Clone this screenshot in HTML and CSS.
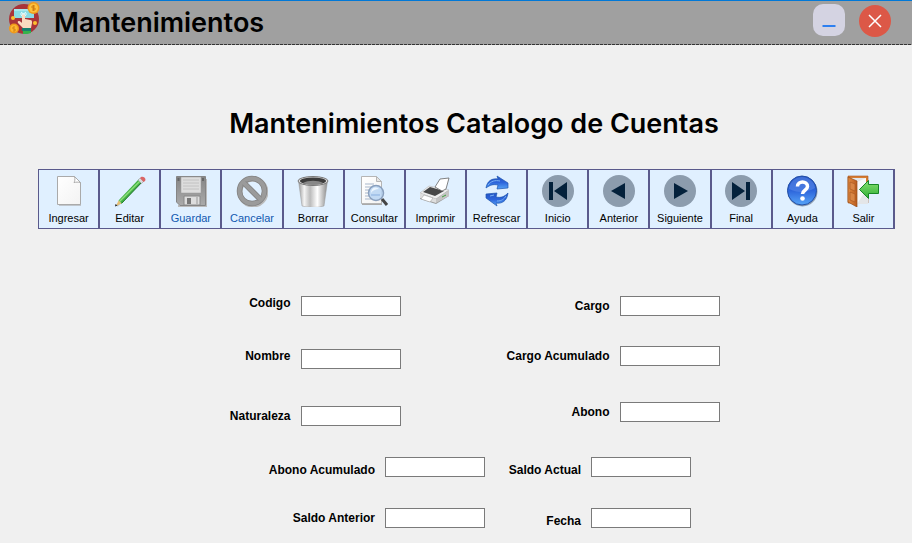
FILE: index.html
```html
<!DOCTYPE html>
<html lang="es">
<head>
<meta charset="utf-8">
<title>Mantenimientos</title>
<link rel="stylesheet" href="styles.css">
</head>
<body>
<header class="titlebar">
  <svg class="logo" viewBox="0 0 32 34" aria-hidden="true">
    <circle cx="16" cy="18" r="15" fill="#a93439"/>
    <path d="M6 8h20v9H6z" fill="#8adbe4"/>
    <path d="M6 8h20v2H6z" fill="#a8e8ee"/>
    <path d="M12 13h7M13 11l5 4M18 11l-5 4" stroke="#e9fbfb" stroke-width="1"/>
    <path d="M14 15c0-2 3-2 3 0v3l5 1c2 0 2 1 2 3l-1 5h-8l-5-5c-1-2 1-3 4 0z" fill="#fbdcc0"/>
    <path d="M14 27h9v3h-9z" fill="#18806d"/>
    <path d="M15 30h8v2c-2 1-6 1-8 1z" fill="#35b34a"/>
    <circle cx="25.500" cy="7" r="6" fill="#f09a1a"/><circle cx="25.500" cy="7" r="4.500" fill="#fdc13c"/>
    <path d="M27 5h-3v2h3v2h-3M25.500 4v6" fill="none" stroke="#d17e12"/>
    <circle cx="6" cy="27.500" r="5" fill="#f09a1a"/><circle cx="6" cy="27.500" r="3.500" fill="#fdb733"/>
    <path d="M7 26H5v2h2v2H5" fill="none" stroke="#d17e12"/>
    <circle cx="5" cy="17" r="2" fill="#fdc02e"/><circle cx="27" cy="22" r="2" fill="#fdc02e"/>
  </svg>
  <h1 class="heading">Mantenimientos</h1>
  <div class="window-controls">
    <button class="window-button minimize" type="button" aria-label="Minimizar">
      <svg viewBox="0 0 32 32"><path d="M9.500 22h13" stroke="#2d7ff0" stroke-width="2"/></svg>
    </button>
    <button class="window-button close" type="button" aria-label="Cerrar">
      <svg viewBox="0 0 32 32"><path d="M10 10l12 12M22 10L10 22" stroke="#fff" stroke-width="1.500"/></svg>
    </button>
  </div>
</header>

<main>
  <h2 class="heading page-heading">Mantenimientos Catalogo de Cuentas</h2>

  <svg class="defs" aria-hidden="true">
    <defs>
      <linearGradient id="paper" x2="1" y2="1"><stop offset="0" stop-color="#fff"/><stop offset="1" stop-color="#f3f3f3"/></linearGradient>
      <linearGradient id="metal"><stop offset="0" stop-color="#999"/><stop offset=".2" stop-color="#f4f4f4"/><stop offset=".4" stop-color="#bbb"/><stop offset=".65" stop-color="#fff"/><stop offset="1" stop-color="#888"/></linearGradient>
      <linearGradient id="blue" x2="0" y2="1"><stop offset="0" stop-color="#2453c4"/><stop offset=".5" stop-color="#2d65db"/><stop offset="1" stop-color="#57a5f8"/></linearGradient>
      <linearGradient id="gray" x2="0" y2="1"><stop offset="0" stop-color="#858585"/><stop offset="1" stop-color="#aaa"/></linearGradient>
      <linearGradient id="green" x2="0" y2="1"><stop offset="0" stop-color="#88e070"/><stop offset="1" stop-color="#2faf35"/></linearGradient>
      <linearGradient id="wood"><stop offset="0" stop-color="#e18b43"/><stop offset="1" stop-color="#b95c1e"/></linearGradient>
    </defs>
  </svg>

  <nav class="toolbar" aria-label="Acciones">
    <button class="tool" type="button">
      <svg viewBox="0 0 32 32"><path d="M6 31V3h17l5 6v22z" fill="#aaa" opacity=".6"/><path d="M4.500 1.500h17l6 6v22h-23z" fill="url(#paper)" stroke="#aaa"/><path d="M21.500 1.500c1 3 0 5-.5 6 2-.5 4-.5 6.500 0z" fill="#fff" stroke="#aaa"/></svg>
      Ingresar
    </button>
    <button class="tool" type="button">
      <svg viewBox="0 0 32 32"><path d="M3 31L30 5" stroke="#8a9aa0" stroke-width="2" opacity=".4"/><path d="M4.500 25.500L25 4l3 3L7.500 28.500z" fill="#43b045"/><path d="M5 26L26 5l1 1L6 27z" fill="#8de07b"/><path d="M7.500 28.500L28 7" stroke="#217b2b"/><path d="M4.500 25.500l3 3L2 31z" fill="#e5bd73"/><path d="M1.500 29l2 1.500-2.500 1z" fill="#222"/><path d="M24 5l2-2 3.500 3.500-2 2z" fill="#d8dce0" stroke="#999" stroke-width=".5"/><path d="M26 3c2-3 7 0 5 3l-1.500 1z" fill="#da6565"/></svg>
      Editar
    </button>
    <button class="tool" type="button" disabled>
      <svg viewBox="0 0 32 32"><path d="M3 31h28V4" fill="none" stroke="#bbb" stroke-width="2"/><path d="M1.500 1.500h29v29H5l-3.500-3.500z" fill="url(#gray)" stroke="#858585"/><path d="M6 2h20v16H6z" fill="#ddd" stroke="#999" stroke-width=".5"/><path d="M8 5h16M8 8h16M8 11h16M8 14h16" stroke="#c2c2c2"/><path d="M2.500 3h2v3h-2zM27 3h2v3h-2z" fill="#666"/><path d="M9 21h16v9H9z" fill="#ddd" stroke="#888"/><path d="M12 23h4v6h-4z" fill="#777"/><path d="M22 22v7" stroke="#bbb" stroke-width="2"/></svg>
      Guardar
    </button>
    <button class="tool" type="button" disabled>
      <svg viewBox="0 0 32 32"><circle cx="17" cy="17" r="13" fill="none" stroke="#bbb" stroke-width="5"/><circle cx="16" cy="16" r="12.500" fill="none" stroke="#828282" stroke-width="5.500"/><circle cx="16" cy="16" r="12.500" fill="none" stroke="#9b9b9b" stroke-width="4"/><path d="M8 8l16 16" stroke="#828282" stroke-width="5.500"/><path d="M7 7l18 18" stroke="#9b9b9b" stroke-width="4"/></svg>
      Cancelar
    </button>
    <button class="tool" type="button">
      <svg viewBox="0 0 32 32"><path d="M1.500 6l3.500 25c6 2 16 2 22 0l3.500-25z" fill="url(#metal)" stroke="#999" stroke-width=".5"/><ellipse cx="16" cy="6" rx="15" ry="4.500" fill="#ddd" stroke="#777"/><ellipse cx="16" cy="6" rx="13" ry="3.500" fill="#3c3c3c"/><path d="M6 8c5-3 15-3 20 0-5 2-15 2-20 0z" fill="#888"/></svg>
      Borrar
    </button>
    <button class="tool" type="button">
      <svg viewBox="0 0 32 32"><path d="M4 29h20" stroke="#aaa" stroke-width="2"/><path d="M3.500 1.500h15l5 5v22h-20z" fill="url(#paper)" stroke="#b5b5b5"/><path d="M18.500 1.500v5h5z" fill="#e5e5e5" stroke="#b5b5b5"/><path d="M7 9h9M7 12h9M7 15h5M7 18h4M7 21h4M7 24h7" stroke="#a8b7cb"/><path d="M24 24l5 6" stroke="#444" stroke-width="3"/><circle cx="18" cy="18" r="7.500" fill="#b9d5f3" fill-opacity=".85" stroke="#899fbd" stroke-width="1.500"/><path d="M13 18c0-5 4-7 8-4-3 0-6 1-8 4z" fill="#edf6ff"/><path d="M13 20h9" stroke="#89afe0"/></svg>
      Consultar
    </button>
    <button class="tool" type="button">
      <svg viewBox="0 0 32 32"><path d="M1 19l9-7 20 4v5l-13 8-16-5z" fill="#999"/><path d="M1 18l9-7 20 4-13 9z" fill="#eee" stroke="#aaa" stroke-width=".5"/><path d="M4 17l7-5 14 4-9 5z" fill="#484848"/><path d="M16 12l5-8 9-1-3 11-4 2z" fill="#fff" stroke="#666" stroke-width=".8"/><path d="M17 24l13-9v6l-13 7z" fill="#c4c4c4"/><path d="M1 18l16 6v4L1 23z" fill="#dedede"/><path d="M5 20l9 3-3 4-9-3z" fill="#fff" stroke="#999" stroke-width=".5"/><path d="M23 22l4-2" stroke="#40a03e"/></svg>
      Imprimir
    </button>
    <button class="tool" type="button">
      <svg viewBox="0 0 32 32"><g fill="url(#blue)" stroke="#1c55af" stroke-width=".7"><path d="M5 13C6 6 11 3 17 4l-1-3 11 7v5l-11 1 1-4c-5-1-8 0-12 3z"/><path d="M27 18c-1 8-6 11-12 10l1 3L5 23v-4l11-1-1 4c5 1 8 0 12-4z"/></g><path d="M7 10c3-4 7-5 12-4M9 21l4-1M16 26c5 0 7-2 9-5" fill="none" stroke="#79b2f3"/></svg>
      Refrescar
    </button>
    <button class="tool" type="button">
      <svg viewBox="0 0 32 32"><circle cx="16" cy="16" r="16" fill="#8c9cad"/><path d="M7 7h4v18H7zM25 7v18L12 16z" fill="#04213b"/></svg>
      Inicio
    </button>
    <button class="tool" type="button">
      <svg viewBox="0 0 32 32"><circle cx="16" cy="16" r="16" fill="#8c9cad"/><path d="M22 8v16L8 16z" fill="#04213b"/></svg>
      Anterior
    </button>
    <button class="tool" type="button">
      <svg viewBox="0 0 32 32"><circle cx="16" cy="16" r="16" fill="#8c9cad"/><path d="M10 8v16l14-8z" fill="#04213b"/></svg>
      Siguiente
    </button>
    <button class="tool" type="button">
      <svg viewBox="0 0 32 32"><circle cx="16" cy="16" r="16" fill="#8c9cad"/><path d="M7 7v18l13-9zM21 7h4v18h-4z" fill="#04213b"/></svg>
      Final
    </button>
    <button class="tool" type="button">
      <svg viewBox="0 0 32 32"><circle cx="16.500" cy="16.500" r="15" fill="#8e9db0"/><circle cx="16" cy="15.500" r="14.500" fill="url(#blue)" stroke="#2450a5"/><path d="M3 14C4 6 10 2 16 2s12 4 13 11c-9 5-17 5-26 1z" fill="#6f9cf0" opacity=".4"/><path d="M11.500 11.500c0-6 10-6 10 0 0 4-5 3.500-5 7.500" fill="none" stroke="#fff" stroke-width="3.500"/><circle cx="16.500" cy="23.500" r="2.300" fill="#fff"/></svg>
      Ayuda
    </button>
    <button class="tool" type="button">
      <svg viewBox="0 0 32 32"><path d="M1 28V1h20v27z" fill="#d77d32" stroke="#a85922" stroke-width=".6"/><path d="M4 3h15v11l2 3v12H10z" fill="#e4e6e8"/><path d="M10 7l9-4v12l-9 14z" fill="#f8f8f8"/><path d="M1 2l9 4v26l-9-5z" fill="url(#wood)" stroke="#9a4d18" stroke-width=".7"/><path d="M3 7l5 2v7l-5-2zM3 17l5 2v8l-5-2z" fill="#d98645" stroke="#a65520" stroke-width=".6"/><path d="M12.500 14.500l9-9v4h10v9h-10v5z" fill="url(#green)" stroke="#178725"/></svg>
      Salir
    </button>
  </nav>

  <form class="account-form">
    <div class="main-fields">
      <div class="column first">
        <div class="field label-top"><label for="codigo">Codigo</label><input id="codigo" type="text"></div>
        <div class="field label-top"><label for="nombre">Nombre</label><input id="nombre" type="text"></div>
        <div class="field"><label for="naturaleza">Naturaleza</label><input id="naturaleza" type="text"></div>
      </div>
      <div class="column second">
        <div class="field"><label for="cargo">Cargo</label><input id="cargo" type="text"></div>
        <div class="field"><label for="cargo-acumulado">Cargo Acumulado</label><input id="cargo-acumulado" type="text"></div>
        <div class="field"><label for="abono">Abono</label><input id="abono" type="text"></div>
      </div>
    </div>
    <div class="extra-fields">
      <div class="field label-bottom"><label for="abono-acumulado">Abono Acumulado</label><input id="abono-acumulado" type="text"></div>
      <div class="field label-bottom"><label for="saldo-actual">Saldo Actual</label><input id="saldo-actual" type="text"></div>
      <div class="field"><label for="saldo-anterior">Saldo Anterior</label><input id="saldo-anterior" type="text"></div>
      <div class="field label-bottom"><label for="fecha">Fecha</label><input id="fecha" type="text"></div>
    </div>
  </form>
</main>
</body>
</html>
```
FILE: styles.css
```css
* {
  box-sizing: border-box;
}

body {
  margin: 0;
  background: #f0f0f0;
  color: #000;
  font-family: "Liberation Sans", Arial, sans-serif;
}

.titlebar {
  display: flex;
  align-items: flex-start;
  height: 45px;
  padding: 0 21px 0 8px;
  border-top: 1px solid #0078d7;
  background:
    repeating-linear-gradient(90deg, #333 0 3px, #a0a0a0 3px 4px) bottom / 100% 1px no-repeat,
    #a0a0a0;
}

.logo {
  width: 32px;
  height: 34px;
}

.heading {
  margin: 0;
  font-family: Inter, "Century Gothic", sans-serif;
  font-size: 27px;
  font-weight: 600;
  line-height: 32px;
}

.titlebar .heading {
  margin: 6px 0 0 14px;
}

.window-controls {
  display: flex;
  gap: 14px;
  margin: 3px 0 0 auto;
}

.window-button {
  width: 32px;
  height: 32px;
  padding: 0;
  border: 0;
}

.window-button svg {
  display: block;
}

.minimize {
  border-radius: 10px;
  background: #d4d3e2;
}

.close {
  margin-top: 1px;
  border-radius: 50%;
  background: #dc5847;
}

.page-heading {
  margin-top: 63px;
  padding-left: 36px;
  text-align: center;
}

.defs {
  position: absolute;
  width: 0;
  height: 0;
}

.toolbar {
  display: grid;
  grid-template-columns: repeat(14, 1fr);
  margin: 29px 17px 0 38px;
  border: 1px solid #5a5a8c;
  border-right: 0;
  background: #e0f0ff;
}

.tool {
  display: flex;
  flex-direction: column;
  align-items: center;
  gap: 3px;
  height: 58px;
  padding: 5px 0 0;
  border: 0;
  border-right: 2px solid #5a5a8c;
  background: none;
  color: #000;
  font: 11px/16px "Liberation Sans", Arial, sans-serif;
}

.tool:disabled {
  color: #1058b0;
}

.tool svg {
  width: 32px;
  height: 32px;
}

.account-form {
  margin-top: 67px;
  font-family: "Liberation Sans", Arial, sans-serif;
  font-size: 12px;
  font-weight: 700;
  line-height: 14px;
}

.main-fields {
  display: flex;
  justify-content: center;
  gap: 99px;
  padding-left: 28px;
}

.column {
  display: grid;
}

.first {
  width: 180px;
  grid-template-rows: 53px 57px 20px;
}

.second {
  width: 220px;
  grid-template-rows: 50px 56px 20px;
}

.field {
  display: flex;
  justify-content: flex-end;
  align-items: center;
  gap: 10px;
  height: 20px;
}

.label-top {
  align-items: flex-start;
}

.label-bottom {
  align-items: flex-end;
}

.field input {
  width: 100px;
  height: 20px;
  padding: 1px 4px;
  border: 1px solid #7a7a7a;
  background: #fff;
  font: inherit;
}

.extra-fields {
  display: grid;
  grid-template-columns: 220px 206px;
  row-gap: 31px;
  justify-content: center;
  margin-top: 31px;
  padding: 0 0 15px 44px;
}
```
